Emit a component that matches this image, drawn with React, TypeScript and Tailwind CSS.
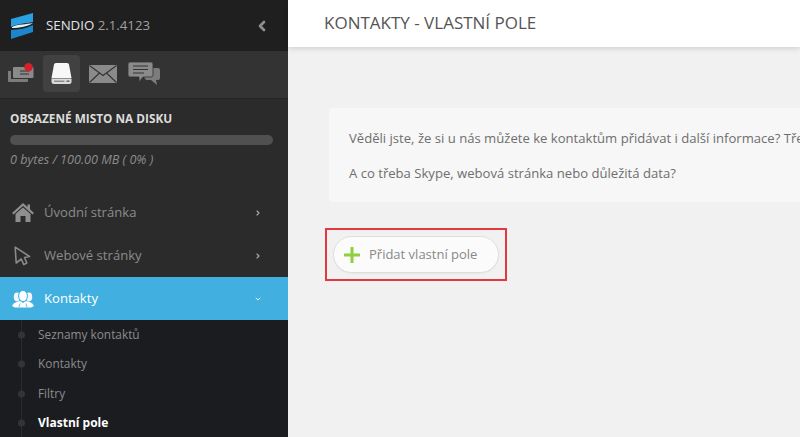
import { ChevronLeft, ChevronRight, ChevronDown } from 'lucide-react'

const font = { fontFamily: '"Open Sans", "Liberation Sans", sans-serif' }

function Logo() {
  return (
    <svg width="23" height="26" viewBox="0 0 23 26" className="shrink-0">
      <path d="M0 6 L22 0 V9 C15 10.5 7 10.5 0 14 Z" fill="#2a9fe2" />
      <path d="M22 12 V19 L0 26 V17 C8 16.5 15 15.5 22 12 Z" fill="#1c86cc" />
      <path d="M1 14 C7 11 15 11.5 22 10 C17 13.5 9 15 1 15 Z" fill="#dff1fb" />
    </svg>
  )
}

function InboxIcon() {
  return (
    <svg width="26" height="21" viewBox="0 0 26 21" className="relative">
      <path d="M0 8 H3 V16 H20 V18 Q20 19 19 19 H1 Q0 19 0 18 Z" fill="#7c7c7c" />
      <path d="M5 5 Q5 4 6 4 H24.5 Q25.5 4 25.5 5 V14 Q25.5 15 24.5 15 H6 Q5 15 5 14 Z" fill="#8a8a8a" />
      <path d="M12 8 H21 M12 11 H21" stroke="#333" strokeWidth="1.2" />
      <circle cx="20.5" cy="4.2" r="4.2" fill="#d3202a" />
    </svg>
  )
}

function DriveIcon() {
  return (
    <svg width="21" height="21" viewBox="0 0 21 21">
      <path d="M3 1.5 Q3.1 0 5 0 H16 Q17.9 0 18 1.5 L20.5 15 H0.5 Z" fill="#f7f7f7" />
      <path d="M0.5 15.6 H20.5 V18.5 Q20.5 21 18 21 H3 Q0.5 21 0.5 18.5 Z" fill="#dcdcdc" />
      <path d="M3 18.2 H13.5" stroke="#666" strokeWidth="1" />
      <path d="M15.5 18.2 H18.5" stroke="#666" strokeWidth="1.5" />
    </svg>
  )
}

function MailIcon() {
  return (
    <svg width="28" height="18" viewBox="0 0 28 18">
      <rect x="0" y="0" width="28" height="18" fill="#8a8a8a" />
      <path d="M0.5 0.5 L14 10.5 L27.5 0.5 M0.5 17.5 L10.5 8 M27.5 17.5 L17.5 8" stroke="#333" strokeWidth="1.1" fill="none" />
    </svg>
  )
}

function ChatIcon() {
  return (
    <svg width="33" height="23" viewBox="0 0 33 23">
      <path d="M23 6 H30 Q32 6 32 8 V16 Q32 18 30 18 H28 L29 23 L23 18 H18 L16 15 H23 Z" fill="#7c7c7c" />
      <path d="M2 0 H23 Q25 0 25 2 V13 Q25 15 23 15 H15 L11 20 L11 15 H2 Q0 15 0 13 V2 Q0 0 2 0 Z" fill="#8a8a8a" stroke="#333" strokeWidth="0.8" />
      <path d="M5 4 H20 M5 7.5 H20 M5 11 H16" stroke="#333" strokeWidth="1.2" />
    </svg>
  )
}

function HomeIcon() {
  return (
    <svg width="22" height="19" viewBox="0 0 22 19">
      <path d="M11 0 L15.5 4 V1.5 H18 V6.2 L22 10 L20.5 11.5 L11 3 L1.5 11.5 L0 10 Z" fill="#8f8f8f" />
      <path d="M3.5 11 L11 4.5 L18.5 11 V19 H13.5 V13 H8.5 V19 H3.5 Z" fill="#8f8f8f" />
    </svg>
  )
}

function CursorIcon() {
  return (
    <svg width="17" height="20" viewBox="0 0 17 20">
      <path d="M1.2 1.2 L15.5 10.5 L10.5 11.5 L12.8 17 L9.8 18.6 L7.3 13 L2.2 17 Z" fill="none" stroke="#8a8a8a" strokeWidth="1.6" strokeLinejoin="round" />
    </svg>
  )
}

function PeopleIcon() {
  return (
    <svg width="22" height="18" viewBox="0 0 22 18">
      <ellipse cx="5" cy="7" rx="3.2" ry="4.4" fill="#eef7fc" />
      <ellipse cx="17" cy="7" rx="3.2" ry="4.4" fill="#eef7fc" />
      <ellipse cx="11" cy="6" rx="4.4" ry="5.6" fill="#fff" stroke="#41b0e0" strokeWidth="1" />
      <path d="M0 16 Q1 13 4.5 12 L8 11 L11 13 L14 11 L17.5 12 Q21 13 22 16 L19 17.5 H3 Z" fill="#fff" />
      <path d="M7 17 L8 13.5 M15 17 L14 13.5" stroke="#41b0e0" strokeWidth="0.8" />
    </svg>
  )
}

function NavItem({ icon, label, active }: { icon: React.ReactNode; label: string; active?: boolean }) {
  return (
    <div className={`flex h-[43px] items-center ${active ? 'bg-[#41b0e0] text-white' : 'text-[#8c8c8c]'}`}>
      <div className="flex w-[44px] shrink-0 justify-center pl-[1px]">{icon}</div>
      <span className="flex-1 text-[13.1px]">{label}</span>
      {active ? (
        <ChevronDown size={8} strokeWidth={3} className="mr-[26px] text-[#e6f4fb]" />
      ) : (
        <ChevronRight size={8} strokeWidth={3.5} className="mr-[26px] text-[#a8a8a8]" />
      )}
    </div>
  )
}

function SubItem({ label, current }: { label: string; current?: boolean }) {
  return (
    <div className="relative flex h-[29.5px] items-center pl-[38px]">
      <span className="absolute left-[18px] top-1/2 h-[7px] w-[7px] -translate-y-1/2 rounded-full bg-[#333438]" />
      <span className={current ? 'text-[12px] font-bold text-white' : 'text-[11.85px] text-[#8c8c8c]'}>{label}</span>
    </div>
  )
}

export default function App() {
  return (
    <div className="flex h-[437px] w-[800px] overflow-hidden bg-[#f1f1f1]" style={font}>
      {/* Sidebar */}
      <aside className="flex w-[288px] shrink-0 flex-col bg-[#2b2b2b]">
        <div className="flex h-[51px] shrink-0 items-center bg-[#1f1f1f] pl-[11px] pr-[18px]">
          <Logo />
          <span className="ml-[12px] flex-1 text-[13.25px] text-[#e4e4e4]">
            SENDIO <span className="text-[#a0a0a0]">2.1.4123</span>
          </span>
          <ChevronLeft size={16} strokeWidth={4} className="text-[#8f8f8f]" />
        </div>

        <div className="flex h-[48px] shrink-0 items-center border-b border-[#252525] bg-[#333333] pb-[2px] pl-[8px]">
          <InboxIcon />
          <div className="ml-[9px] flex h-[37px] w-[37px] items-center justify-center rounded-[4px] bg-[#414141]">
            <DriveIcon />
          </div>
          <div className="ml-[9px]"><MailIcon /></div>
          <div className="ml-[11px]"><ChatIcon /></div>
        </div>

        <div className="h-[79px] shrink-0 bg-[#2b2b2b] px-[10px] pt-[11px]">
          <div className="whitespace-nowrap text-[11.8px] font-bold leading-[16px] text-[#dcdcdc]">OBSAZENÉ MISTO NA DISKU</div>
          <div className="mt-[9px] h-[10px] w-[263px] rounded-full bg-[#505050]" />
          <div className="mt-[7px] whitespace-nowrap text-[12.6px] italic leading-[16px] text-[#8c8c8c]">0 bytes / 100.00 MB ( 0% )</div>
        </div>

        <nav className="flex flex-1 flex-col bg-[#2b2b2b] pt-[13px]">
          <NavItem icon={<HomeIcon />} label="Úvodní stránka" />
          <NavItem icon={<CursorIcon />} label="Webové stránky" />
          <NavItem icon={<PeopleIcon />} label="Kontakty" active />
          <div className="relative flex-1 bg-[#1b1c20]">
            <span className="absolute bottom-0 left-[21px] top-0 w-[1px] bg-[#2a2b2f]" />
            <SubItem label="Seznamy kontaktů" />
            <SubItem label="Kontakty" />
            <SubItem label="Filtry" />
            <SubItem label="Vlastní pole" current />
          </div>
        </nav>
      </aside>

      {/* Main */}
      <main className="flex min-w-0 flex-1 flex-col">
        <header className="flex h-[47px] shrink-0 items-center bg-white pb-[1px] pl-[36px] shadow-[0_2px_5px_rgba(0,0,0,0.13)]">
          <h1 className="whitespace-nowrap text-[17px] font-normal text-[#555555]">KONTAKTY - VLASTNÍ POLE</h1>
        </header>

        <div className="flex flex-col items-start pl-[37px] pt-[61px]">
          <div className="ml-[4px] h-[94px] w-[600px] shrink-0 overflow-hidden rounded-l-[4px] bg-[#f7f7f7] pl-[20px] pt-[21px] text-[13.1px] leading-[18px] text-[#6e6e6e]">
            <p className="whitespace-nowrap">Věděli jste, že si u nás můžete ke kontaktům přidávat i další informace? Třeba</p>
            <p className="mt-[17px] whitespace-nowrap">A co třeba Skype, webová stránka nebo důležitá data?</p>
          </div>

          <div className="mt-[26px] flex h-[53px] w-[182px] items-center justify-center border-2 border-[#e2383f]">
            <button className="flex h-[37px] w-[166px] items-center rounded-full border border-[#dedede] bg-[#fbfbfb] pl-[10px] text-[13px] text-[#888888] shadow-[0_1px_1px_rgba(0,0,0,0.04)]">
              <svg width="16" height="16" viewBox="0 0 16 16" className="shrink-0">
                <path d="M6.5 0 H9.5 V6.5 H16 V9.5 H9.5 V16 H6.5 V9.5 H0 V6.5 H6.5 Z" fill="#8ed03c" />
              </svg>
              <span className="ml-[9px]">Přidat vlastní pole</span>
            </button>
          </div>
        </div>
      </main>
    </div>
  )
}
